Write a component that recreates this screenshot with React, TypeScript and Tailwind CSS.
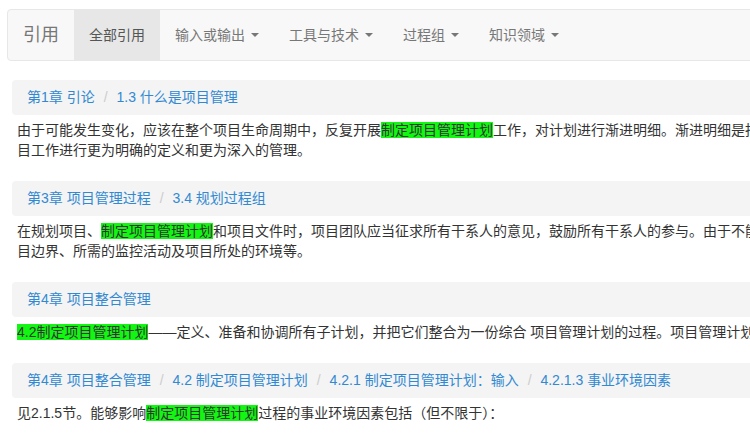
import React from "react"

const font = "font-['Liberation_Sans','Noto_Sans_CJK_SC',sans-serif]"

interface Citation {
  crumbs: string[]
  lines: React.ReactNode[]
}

function Mark({ children }: { children: React.ReactNode }) {
  return <span className="bg-[#11f711]">{children}</span>
}

const citations: Citation[] = [
  {
    crumbs: ["第1章 引论", "1.3 什么是项目管理"],
    lines: [
      <>
        由于可能发生变化，应该在整个项目生命周期中，反复开展<Mark>制定项目管理计划</Mark>
        工作，对计划进行渐进明细。渐进明细是指随着信息越来越详细和估算越来越准确，而持续改进和细化计划。渐进明细使项目管理团队能随项目的进展，对项
      </>,
      "目工作进行更为明确的定义和更为深入的管理。",
    ],
  },
  {
    crumbs: ["第3章 项目管理过程", "3.4 规划过程组"],
    lines: [
      <>
        在规划项目、<Mark>制定项目管理计划</Mark>
        和项目文件时，项目团队应当征求所有干系人的意见，鼓励所有干系人的参与。由于不能无限期地收集反馈和细化文件，组织的程序应规定初始规划工作何时结束。制定这些程序时，要考虑项
      </>,
      "目边界、所需的监控活动及项目所处的环境等。",
    ],
  },
  {
    crumbs: ["第4章 项目整合管理"],
    lines: [
      <>
        <Mark>4.2制定项目管理计划</Mark>
        ——定义、准备和协调所有子计划，并把它们整合为一份综合 项目管理计划的过程。项目管理计划确定项目的执行、监控和收尾方式。
      </>,
    ],
  },
  {
    crumbs: [
      "第4章 项目整合管理",
      "4.2 制定项目管理计划",
      "4.2.1 制定项目管理计划：输入",
      "4.2.1.3 事业环境因素",
    ],
    lines: [
      <>
        见2.1.5节。能够影响<Mark>制定项目管理计划</Mark>过程的事业环境因素包括（但不限于）：
      </>,
    ],
  },
]

function Caret() {
  return (
    <span className="ml-[2px] inline-block h-0 w-0 border-x-4 border-t-4 border-x-transparent border-t-[#777] align-middle" />
  )
}

function Navbar() {
  const menus = ["输入或输出", "工具与技术", "过程组", "知识领域"]
  return (
    <div className="ml-[7px] mt-[9px] flex h-[52px] w-[1160px] items-stretch rounded border border-[#e7e7e7] bg-[#f8f8f8] text-[#777]">
      <span className="flex items-center px-[15px] text-[18px]">引用</span>
      <span className="flex items-center bg-[#e7e7e7] px-[15px] text-[14px] text-[#555]">全部引用</span>
      {menus.map((m) => (
        <span key={m} className="flex items-center px-[15px] text-[14px]">
          {m}
          <span className="w-[4px]" />
          <Caret />
        </span>
      ))}
    </div>
  )
}

export default function App() {
  return (
    <div className={`h-[444px] w-[750px] overflow-hidden bg-white ${font}`}>
      <div className="w-[1170px]">
        <Navbar />
        <div className="ml-[12px] mt-[19px]">
          {citations.map((c, i) => (
            <div key={i} className="mb-[21px]">
              <div className="flex h-[35px] items-center whitespace-nowrap rounded bg-[#f4f4f4] px-[15px] text-[14px] text-[#3289d2]">
                {c.crumbs.map((crumb, j) => (
                  <React.Fragment key={j}>
                    {j > 0 && <span className="ml-[4px] px-[5px] text-[#ccc]">/&nbsp;</span>}
                    <span>{crumb}</span>
                  </React.Fragment>
                ))}
              </div>
              <div className="mt-[5px] px-[5px] text-[14px] leading-[20px] text-[#333]">
                {c.lines.map((l, j) => (
                  <div key={j} className="whitespace-nowrap">
                    {l}
                  </div>
                ))}
              </div>
            </div>
          ))}
        </div>
      </div>
    </div>
  )
}
